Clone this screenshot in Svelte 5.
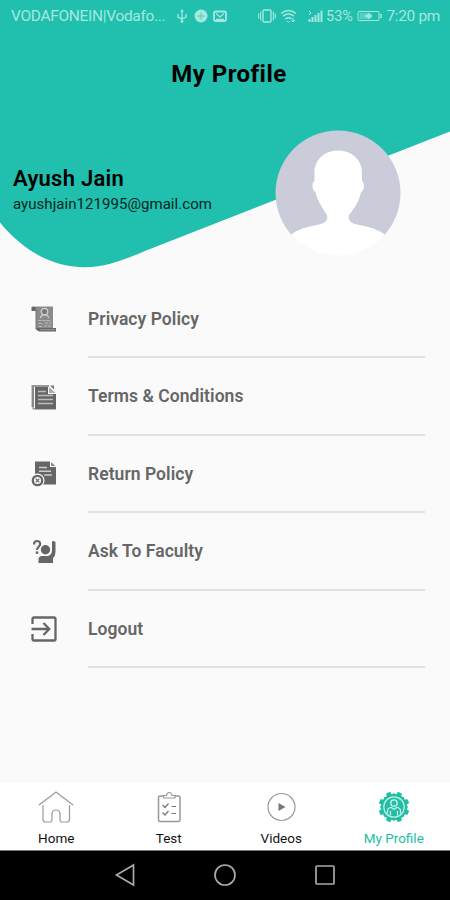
<script lang="ts">
  const user = { name: 'Ayush Jain', email: 'ayushjain121995@gmail.com' };

  const rows = [
    { icon: 'privacy', label: 'Privacy Policy' },
    { icon: 'terms', label: 'Terms & Conditions' },
    { icon: 'return', label: 'Return Policy' },
    { icon: 'ask', label: 'Ask To Faculty' },
    { icon: 'logout', label: 'Logout' },
  ];

  const tabs = ['Home', 'Test', 'Videos', 'My Profile'];
  let active = $state('My Profile');
</script>

<div class="screen">
  <header>
    <svg class="wave" viewBox="0 0 450 280" aria-hidden="true">
      <path
        d="M0 0H450V131.500L150 249C123 260 106 267.300 85 267.300C49 267.300 20 247 0 222.500Z"
        fill="#20bfae"
      />
    </svg>

    <div class="status">
      <span class="carrier">VODAFONEIN|Vodafo...</span>
      <svg class="notices" viewBox="0 0 54 16" fill="none" stroke="currentColor" stroke-width="1.300">
        <path d="M7 2V14M3 6V9L7 11L11 9V6" />
        <path d="M5.200 3.500L7 1L8.800 3.500Z" fill="currentColor" stroke="none" />
        <circle cx="7" cy="13.500" r="1.400" fill="currentColor" stroke="none" />
        <circle cx="26" cy="8" r="6.500" fill="currentColor" stroke="none" />
        <path d="M22.500 8H29.500M26 4.500V11.500" stroke="#20bfae" stroke-opacity=".5" />
        <rect x="39" y="3.500" width="12" height="9.500" rx="1.500" stroke-width="1.800" />
        <path d="M41 5.500L45 9L49 5.500M41 11.500H49" />
      </svg>
      <svg class="signals" viewBox="0 0 68 16" fill="none" stroke="currentColor" stroke-width="1.400">
        <rect x="5" y="2" width="8" height="12" rx="1" />
        <path d="M2.700 3.500V12.500M15.300 3.500V12.500M.700 5.500V10.500M17.300 5.500V10.500" stroke-width="1.100" />
        <path d="M23 5.500Q30.500 -.500 38 5.500M25 8.200Q30.500 3.700 36 8.200M27.300 11Q30.500 8.500 33.700 11" />
        <path d="M29 13L30.500 14.500L32 13M35 10V14M33.500 12.500L35 14L37 12" stroke-width="1" />
        <path d="M51.500 14V11M54.500 14V9M57.500 14V7M60.500 14V5M63.500 14V2.500" stroke-width="2" />
        <path d="M51 3L53 5L51 7" stroke-width="1" />
      </svg>
      <span class="percent">53%</span>
      <svg class="battery" viewBox="0 0 25 14" fill="none" stroke="currentColor">
        <rect x="1" y="2.500" width="21" height="9" rx="1" />
        <rect x="2.500" y="4" width="12" height="6" fill="currentColor" fill-opacity=".4" stroke="none" />
        <path d="M24 5V9" stroke-width="1.500" />
        <path d="M8 7H15M11.500 4V10" stroke-width="1.800" />
      </svg>
      <span class="clock">7:20 pm</span>
    </div>

    <h1>My Profile</h1>

    <div class="user">
      <div class="who">
        <h2>{user.name}</h2>
        <p>{user.email}</p>
      </div>
      <svg class="avatar" viewBox="0 0 126 126" aria-hidden="true">
        <clipPath id="round"><circle cx="63" cy="63" r="62.500" /></clipPath>
        <g clip-path="url(#round)">
          <path d="M0 0H126V108H0Z" fill="#cacdd9" />
          <path
            d="M63 20.500C49 20.500 39.500 30 39.500 43V51C36.500 52 37 61 40.500 62C42 70 48 79 52 85C53.500 90 50 93.500 44 94.500C32 97 22 99 15 106V126H111V106C104 99 94 97 82 94.500C76 93.500 72.500 90 74 85C80 78 84.500 70 86 62C89.500 61 90 52 87 51V43C87 30 77 20.500 63 20.500Z"
            fill="#fff"
          />
        </g>
      </svg>
    </div>
  </header>

  <main>
    {#each rows as row}
      <div class="row">
        <svg class="row-icon" viewBox="0 0 26 26" fill="#666">
          {#if row.icon === 'privacy'}
            <path d="M1 .500H22V23H5V5H1Z" fill="#8b8b8b" />
            <path d="M.500 1H4.500V5H.500ZM5 22H25V25.500H8L5 23.500Z" fill="#666" />
            <path d="M5 1V23" stroke="#777" />
            <circle cx="13.500" cy="5.500" r="3.200" fill="#777" stroke="#d0d0d0" stroke-width="1.300" />
            <path d="M9 12L11.500 9H16L18 12" fill="none" stroke="#ccc" stroke-width="1.300" />
            <path d="M7.500 14.500H20M7.500 17.500H12M14 17H20M8 20.500H11M13 20H20" stroke="#bdbdbd" stroke-dasharray="3 1" />
            <path d="M9 23.700H24" stroke="#aaa" stroke-width=".8" />
          {:else if row.icon === 'terms'}
            <path d="M.500 1H18V3H3V23H.500Z" fill="#999" />
            <path d="M2 2.500V25H25" fill="none" stroke="#777" />
            <path d="M4 3H17V10H25V25H4Z" />
            <path d="M18 3L24.500 9H18Z" fill="#aaa" />
            <path d="M19 1.500H23V5.500Z" fill="#777" />
            <path d="M7 7.500H15M7 11.500H22M7 15.500H22M7 19.500H22" stroke="#bbb" stroke-width="1.500" />
          {:else if row.icon === 'return'}
            <path d="M4 .500H19V6H25V23.500H4Z" />
            <path d="M20 1L24.500 5H20Z" fill="#888" />
            <path d="M8 6.500H16M8 10.200H20M13 14H21" stroke="#ccc" stroke-width="1.600" />
            <circle cx="6.500" cy="19.500" r="7" fill="#fafafa" />
            <circle cx="6.500" cy="19.500" r="4.700" fill="none" stroke="#666" stroke-width="2.300" />
            <path d="M4.800 17.800L8.200 21.200M8.200 17.800L4.800 21.200" stroke="#777" stroke-width="1.400" />
          {:else if row.icon === 'ask'}
            <path
              d="M3 5.500C3 2.800 4.500 2 6 2C8 2 9.200 3 9.200 5C9.200 7.500 6 8 6 11"
              fill="none"
              stroke="#666"
              stroke-width="2.200"
            />
            <circle cx="6" cy="13.700" r="1.400" />
            <circle cx="14.500" cy="10.700" r="4.700" />
            <path d="M21 3Q21 2 22.500 2Q24.500 2 24.500 3.500V13Q24.500 17 22 19V24H7.500V20.500Q7.500 17 11 17H17Q20.500 16 21 12Z" />
          {:else}
            <path
              d="M1.500 8V3Q1.500 1.500 3 1.500H23Q24.500 1.500 24.500 3V23Q24.500 24.500 23 24.500H3Q1.500 24.500 1.500 23V18M.500 13H18M12.500 7L18.300 13L12.500 19"
              fill="none"
              stroke="#666"
              stroke-width="2.300"
            />
          {/if}
        </svg>
        <div class="label">{row.label}</div>
      </div>
    {/each}
  </main>

  <nav class="tabs">
    {#each tabs as tab}
      <button class:active={tab === active} onclick={() => (active = tab)}>
        <svg viewBox="0 0 36 34" fill="none" stroke="#999" stroke-width="1.200">
          {#if tab === 'Home'}
            <path d="M1 15L18 2L35 15M5 15V29.500Q5 32 7.500 32H12Q14 32 14 29.500V24Q14 20 18 20Q22 20 22 24V29.500Q22 32 24 32H28.500Q31.500 32 31.500 29.500V15" />
          {:else if tab === 'Test'}
            <rect x="7.500" y="6" width="21.500" height="25.500" rx="1.500" stroke-width="1.500" />
            <path d="M12.500 8V5.500H15.500Q16 2.500 18.200 2.500Q20.500 2.500 21 5.500H24V8Z" fill="#fff" />
            <path d="M11.500 15L14 17.500L17.500 13.500M20.500 16.500H25M11.500 22.500L14 25L17.500 21M20.500 23.500H25" stroke="#777" />
          {:else if tab === 'Videos'}
            <circle cx="18.500" cy="17" r="13.500" />
            <path d="M15.500 13V21L22.500 17Z" fill="#777" stroke="none" />
          {:else}
            <g fill="#20bfa5" stroke="none">
              {#each [0, 45, 90, 135, 180, 225, 270, 315] as angle}
                <rect x="15.500" y="1.500" width="5" height="5" rx="1" transform="rotate({angle + 22.5} 18 17)" />
              {/each}
            </g>
            <path d="M18 3.800L27.300 7.700L31.200 17L27.300 26.300L18 30.200L8.700 26.300L4.800 17L8.700 7.700Z" fill="#20bfa5" stroke="#20bfa5" />
            <circle cx="18" cy="17" r="10.200" stroke="#c5f0e6" stroke-width="1.200" />
            <circle cx="18" cy="13" r="3.200" stroke="#d5f5ee" stroke-width="1.300" />
            <path d="M11.500 23.500V21Q11.500 17.500 15.500 17.500L18 19.500L20.500 17.500Q24.500 17.500 24.500 21V23.500M14.500 21V25.500M21.500 21V25.500" stroke="#d5f5ee" stroke-width="1.200" />
          {/if}
        </svg>
        <span>{tab}</span>
      </button>
    {/each}
  </nav>

  <div class="system">
    <svg viewBox="0 0 24 24"><path d="M20.500 2V22L3.500 12Z" /></svg>
    <svg viewBox="0 0 24 24"><circle cx="12" cy="12" r="10" /></svg>
    <svg viewBox="0 0 24 24"><rect x="3" y="3" width="18" height="18" rx="1" /></svg>
  </div>
</div>

<style>
  :global(body) {
    margin: 0;
  }
  .screen {
    display: flex;
    flex-direction: column;
    width: 450px;
    height: 900px;
    background: #fafafa;
    font-family: Roboto, sans-serif;
    color: #000;
  }
  header {
    position: relative;
    height: 280.5px;
  }
  .wave {
    position: absolute;
    inset: 0;
    width: 450px;
    height: 280px;
  }
  .status,
  h1,
  .user {
    position: relative;
  }
  .status {
    display: flex;
    align-items: center;
    height: 32px;
    padding: 0 10px 0 11px;
    color: #a6e8df;
    font-size: 15.5px;
    white-space: nowrap;
  }
  .carrier {
    width: 164px;
    letter-spacing: -0.32px;
  }
  .notices {
    width: 54px;
    height: 16px;
  }
  .signals {
    width: 68px;
    height: 16px;
    margin-left: 29px;
  }
  .percent {
    width: 31px;
    font-size: 14.5px;
  }
  .battery {
    width: 25px;
    height: 14px;
  }
  .clock {
    margin-left: auto;
    letter-spacing: -0.35px;
  }
  h1 {
    margin: 0;
    padding: 28px 0 0 8px;
    font-size: 24px;
    font-weight: 700;
    line-height: 28px;
    letter-spacing: 0.45px;
    text-align: center;
  }
  .user {
    display: flex;
    justify-content: space-between;
    padding: 42px 49px 0 13px;
  }
  .who {
    padding-top: 35px;
  }
  h2 {
    margin: 0;
    font-size: 22px;
    font-weight: 600;
    line-height: 28px;
    letter-spacing: 0.25px;
  }
  p {
    margin: 0;
    color: #062622;
    font-size: 15px;
    line-height: 22px;
    letter-spacing: 0.05px;
  }
  .avatar {
    width: 126px;
    height: 126px;
  }
  main {
    flex: 1;
  }
  .row {
    display: flex;
    height: 77.5px;
    padding: 0 25px 0 31px;
  }
  .row-icon {
    width: 26px;
    height: 26px;
    margin: 25.5px 31px 0 0;
  }
  .label {
    flex: 1;
    box-sizing: border-box;
    padding-top: 27px;
    border-bottom: 2px solid #e1e1e1;
    color: #666;
    font-size: 17.5px;
    font-weight: 600;
    line-height: 23px;
    letter-spacing: 0.05px;
  }
  .tabs {
    display: grid;
    grid-template-columns: repeat(4, 1fr);
    height: 67px;
    background: #fff;
  }
  button {
    display: flex;
    flex-direction: column;
    align-items: center;
    padding: 7px 0 0;
    border: 0;
    background: none;
    color: #111;
    font: 400 13.5px/20px Roboto, sans-serif;
  }
  button svg {
    width: 36px;
    height: 34px;
    margin-bottom: 4px;
  }
  button.active {
    color: #20bfa5;
  }
  .system {
    display: flex;
    justify-content: center;
    gap: 76px;
    box-sizing: border-box;
    height: 50px;
    padding-top: 12px;
    border-top: 1px solid #777;
    background: #000;
  }
  .system svg {
    width: 24px;
    height: 24px;
    fill: none;
    stroke: #aaa;
    stroke-width: 1.7;
  }
</style>
